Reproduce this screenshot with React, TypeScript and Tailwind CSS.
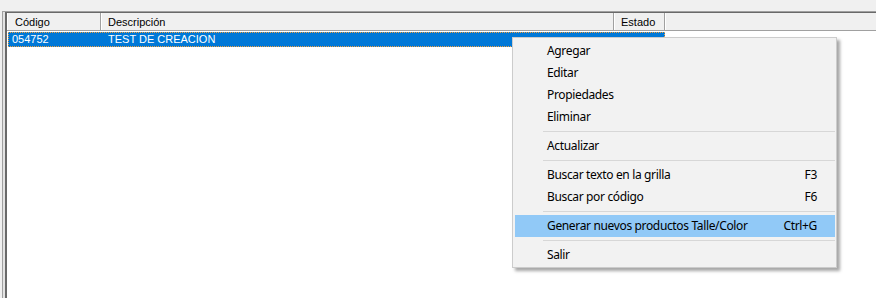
type MenuEntry =
  | { kind: "item"; label: string; shortcut?: string; active?: boolean }
  | { kind: "sep" };

const menu: MenuEntry[] = [
  { kind: "item", label: "Agregar" },
  { kind: "item", label: "Editar" },
  { kind: "item", label: "Propiedades" },
  { kind: "item", label: "Eliminar" },
  { kind: "sep" },
  { kind: "item", label: "Actualizar" },
  { kind: "sep" },
  { kind: "item", label: "Buscar texto en la grilla", shortcut: "F3" },
  { kind: "item", label: "Buscar por código", shortcut: "F6" },
  { kind: "sep" },
  { kind: "item", label: "Generar nuevos productos Talle/Color", shortcut: "Ctrl+G", active: true },
  { kind: "sep" },
  { kind: "item", label: "Salir" },
];

function HeaderCell({ label, className }: { label: string; className: string }) {
  return (
    <div
      className={`h-full border-l border-white border-r border-r-[#a0a0a0] bg-[#f0f0f0] flex items-center pt-[2px] ${className}`}
    >
      {label}
    </div>
  );
}

function ContextMenu() {
  return (
    <div className="absolute left-[512px] top-[37px] w-[325px] bg-[#f2f2f2] border border-[#cccccc] pt-[2px] pb-[1px] shadow-[3px_3px_3px_rgba(0,0,0,0.35)] font-['Noto_Sans',sans-serif] text-[12px] tracking-[-0.35px] text-black">
      {menu.map((m, i) =>
        m.kind === "sep" ? (
          <div key={i} className="h-[7px] flex items-center pl-[30px] pr-[1px]">
            <div className="h-px w-full bg-[#d7d7d7]" />
          </div>
        ) : (
          <div
            key={i}
            className={`h-[22px] ml-[2px] mr-[1px] flex items-center pl-[32px] pr-[18px] ${
              m.active ? "bg-[#91c9f7]" : ""
            }`}
          >
            <span className="flex-1">{m.label}</span>
            {m.shortcut && <span>{m.shortcut}</span>}
          </div>
        )
      )}
    </div>
  );
}

export default function App() {
  return (
    <div className="relative w-[876px] h-[298px] overflow-hidden bg-[#f0f0f0] pt-[11px] pl-[2px] font-['Liberation_Sans',sans-serif] text-[11px] text-black">
      <div className="h-full border-t border-l border-[#a0a0a0] bg-[#e3e3e3] pl-[2px]">
        <div className="h-full border-t border-l-2 border-[#696969] bg-white">
          <div className="flex h-[18px] border-b border-[#a0a0a0] bg-[#f0f0f0]">
            <HeaderCell label="Código" className="w-[94px] pl-[7px]" />
            <HeaderCell label="Descripción" className="w-[513px] pl-[6px]" />
            <HeaderCell label="Estado" className="w-[51px] pl-[6px]" />
            <div className="flex-1 h-full border-l border-white" />
          </div>
          <div className="mt-[1px] ml-[1px] w-[657px] h-[15px] bg-[#0078d7] border border-dotted border-[#f0a040] text-white flex items-center">
            <span className="w-[99px] pl-[3px]">054752</span>
            <span>TEST DE CREACION</span>
          </div>
        </div>
      </div>
      <ContextMenu />
    </div>
  );
}
